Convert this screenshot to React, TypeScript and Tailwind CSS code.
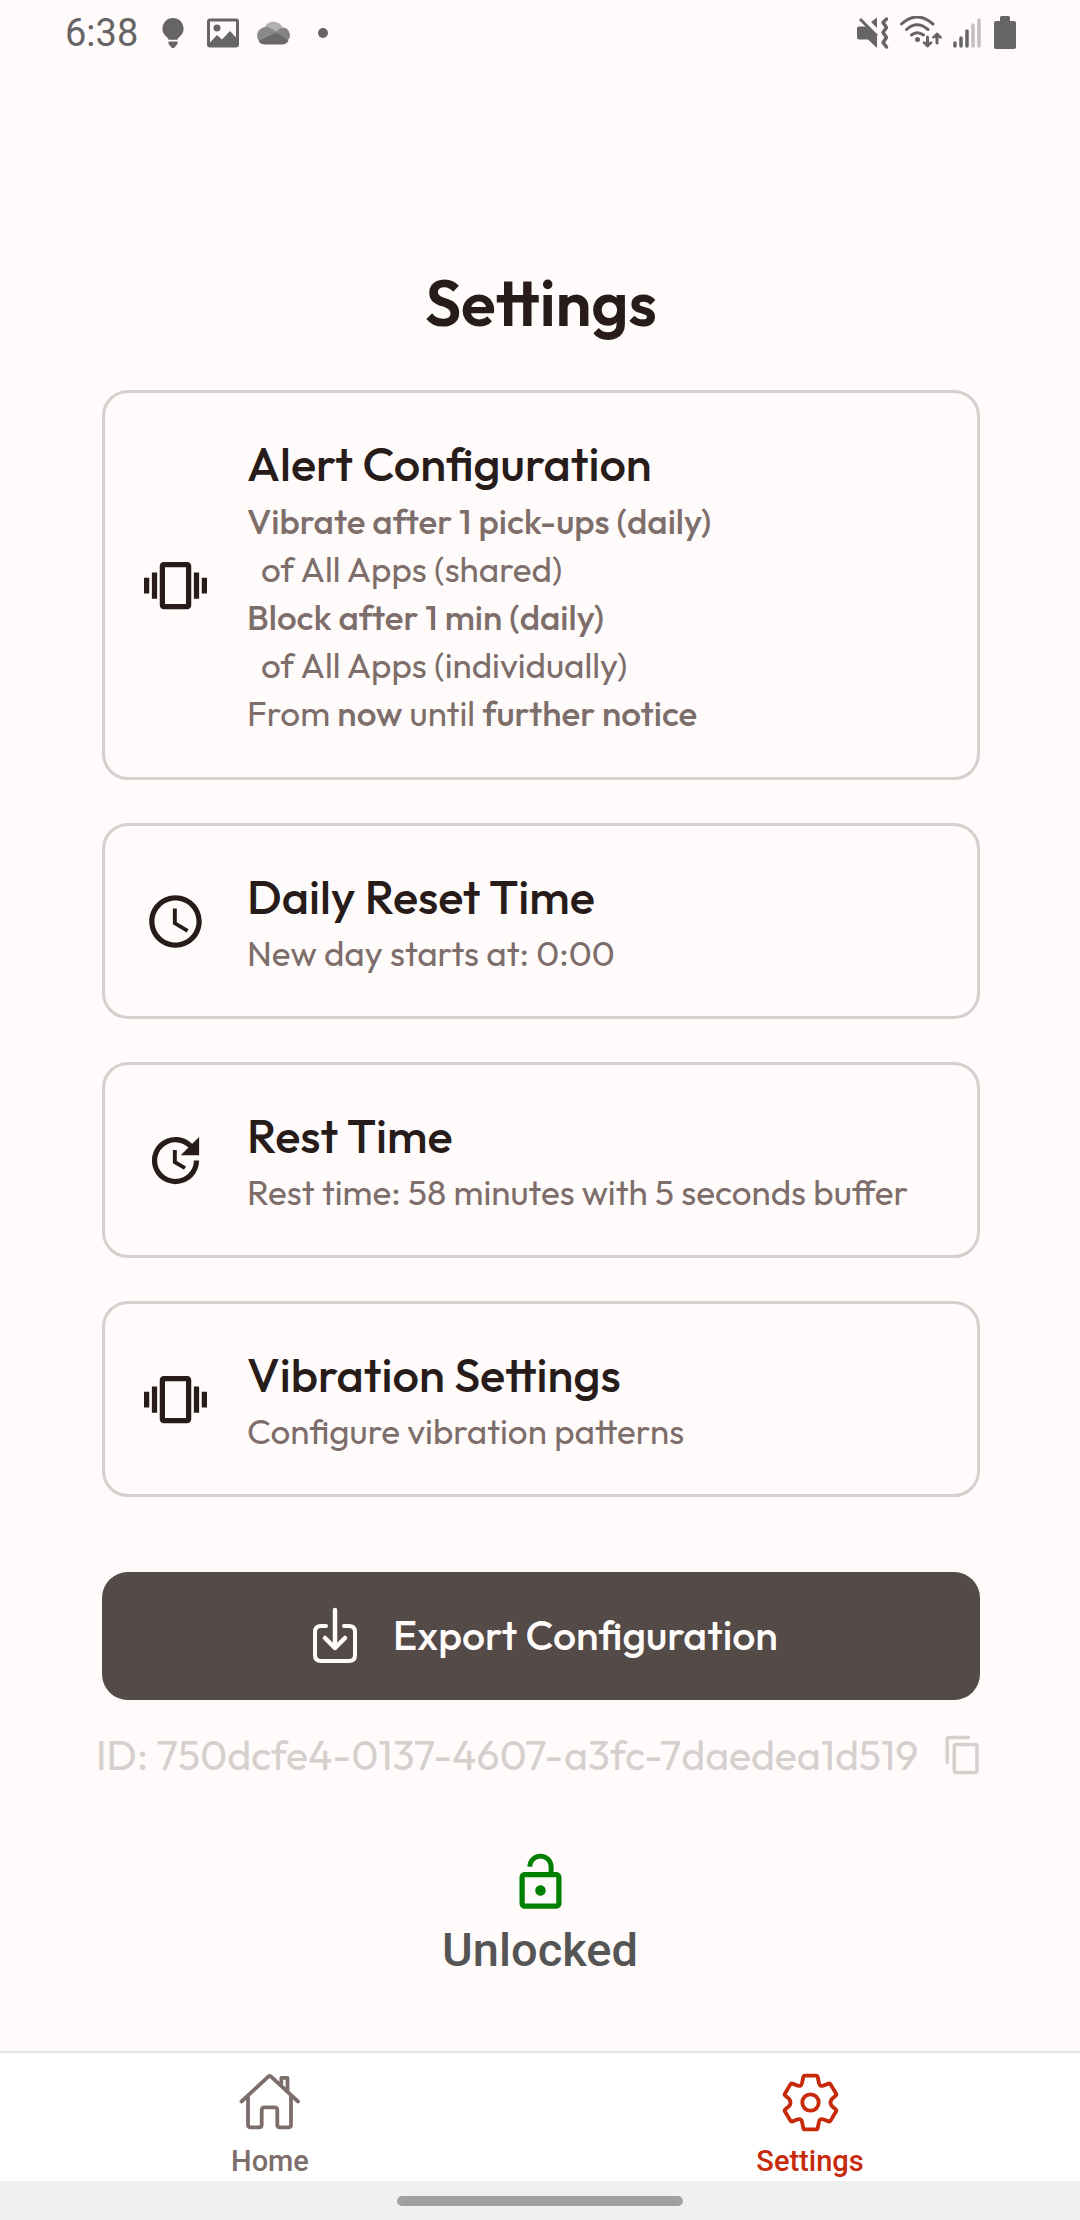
import type { ReactNode } from 'react';

const VIBRATION =
  'M0 15h2V9H0v6zm3 2h2V7H3v10zm19-8v6h2V9h-2zm-3 8h2V7h-2v10zM16.5 3h-9C6.67 3 6 3.67 6 4.5v15c0 .83.67 1.5 1.5 1.5h9c.83 0 1.5-.67 1.5-1.5v-15c0-.83-.67-1.5-1.5-1.5zM16 19H8V5h8v14z';
const CLOCK =
  'M11.99 2C6.47 2 2 6.48 2 12s4.47 10 9.99 10C17.52 22 22 17.52 22 12S17.52 2 11.99 2zM12 20c-4.42 0-8-3.58-8-8s3.58-8 8-8 8 3.58 8 8-3.58 8-8 8zm.5-13H11v6l5.25 3.15.75-1.23-4.5-2.67z';
const UPDATE =
  'M11 8v5l4.25 2.52.77-1.28-3.52-2.09V8H11zm10 2V3l-2.64 2.64C16.74 4.01 14.49 3 12 3a9 9 0 1 0 9 9h-2c0 3.86-3.14 7-7 7s-7-3.14-7-7 3.14-7 7-7c1.93 0 3.68.79 4.95 2.05L14 10h7z';
const COPY =
  'M16 1H4c-1.1 0-2 .9-2 2v14h2V3h12V1zm3 4H8c-1.1 0-2 .9-2 2v14c0 1.1.9 2 2 2h11c1.1 0 2-.9 2-2V7c0-1.1-.9-2-2-2zm0 16H8V7h11v14z';
const LOCK_OPEN =
  'M12 17c1.1 0 2-.9 2-2s-.9-2-2-2-2 .9-2 2 .9 2 2 2zm6-9h-1V6c0-2.76-2.24-5-5-5S7 3.24 7 6h1.9c0-1.71 1.39-3.1 3.1-3.1s3.1 1.39 3.1 3.1v2H6c-1.1 0-2 .9-2 2v10c0 1.1.9 2 2 2h12c1.1 0 2-.9 2-2V10c0-1.1-.9-2-2-2zm0 12H6V10h12v10z';

function Glyph({ d, className }: { d: string; className: string }) {
  return (
    <svg viewBox="0 0 24 24" fill="currentColor" aria-hidden="true" className={className}>
      <path d={d} />
    </svg>
  );
}

function StatusBar() {
  return (
    <header className="flex h-[66px] items-center justify-between pl-[65px] pr-16 font-['Roboto',sans-serif] text-[#666464]">
      <div className="flex items-center">
        <time className="text-[38px] leading-[66px]">6:38</time>
        <svg viewBox="0 0 22 32" fill="currentColor" className="ml-6 h-8 w-[22px]">
          <path d="M11 1a10.500 10.500 0 0 1 6.500 18.700c-1 1-1.700 1.500-2 3H6.500c-.3-1.500-1-2-2-3A10.500 10.500 0 0 1 11 1zM6.500 24.500h9v2.500l-3.500 4h-2l-3.500-4z" />
        </svg>
        <svg viewBox="0 0 32 32" className="ml-[23px] size-8">
          <path fillRule="evenodd" fill="currentColor" d="M3 1.500h26a3 3 0 0 1 3 3v23a3 3 0 0 1-3 3H3a3 3 0 0 1-3-3v-23a3 3 0 0 1 3-3zM3 4.500v21l7-7.500 5 4.500 8-8.500 6 6.500v-16z" />
          <circle cx="10" cy="11" r="3.500" fill="currentColor" />
        </svg>
        <svg viewBox="0 0 34 32" className="ml-[17px] h-8 w-[34px]">
          <path fill="#b3b1b0" d="M8 12C10 3 23 2 27 11L20 17z" />
          <path fill="#8b8988" d="M3 24A8.500 8.500 0 0 1 8 10.300Q12 9.500 15 11.500L22 15.500 6 26z" />
          <path fill="#858382" d="M20 15.500C23 11 28 9.500 31 12a8 8 0 0 1 2 10l-3 2z" />
          <path fill="#6a6867" d="M20 15.500L32.500 23.500C31.500 26 29 27.500 26 27.500H9C6 27.500 4 26.500 2.500 24z" />
        </svg>
        <span className="ml-7 size-[10px] rounded-full bg-current" />
      </div>
      <div className="flex items-center">
        <svg viewBox="0 0 32 34" fill="none" stroke="currentColor" className="h-[34px] w-8">
          <path fill="currentColor" stroke="none" d="M2 10.500h7L20 21v11l-9-8.500H2a2 2 0 0 1-2-2v-9a2 2 0 0 1 2-2zM20 1.500V12l-6-6z" />
          <path strokeWidth="3" d="M3 3l17 17" />
          <path strokeWidth="3.500" strokeLinecap="round" strokeLinejoin="round" d="M29.500 3L26 6.500l3.500 5-3.500 5 3.500 5-3.500 5 3.500 4.500" />
        </svg>
        <svg viewBox="0 0 44 34" fill="none" stroke="currentColor" strokeWidth="3" strokeLinecap="round" className="ml-[10px] h-[34px] w-11">
          <path d="M2.500 8Q18-6 34 8M7.500 13.500Q18 4 29 13.500M12.500 19Q18 14.500 24.500 19" />
          <circle cx="18.500" cy="23.500" r="2.500" fill="currentColor" stroke="none" />
          <path d="M28.500 21v8M38 27v-8" />
          <path strokeWidth="2" strokeLinejoin="round" fill="currentColor" d="M24.500 26.500l4 4 4-4-4 1zM34 21.500l4-4 4 4-4-1z" />
        </svg>
        <svg viewBox="0 0 28 34" fill="none" stroke="currentColor" strokeWidth="3.500" strokeLinecap="round" className="ml-[10px] h-[34px] w-7">
          <path d="M2 27v3M8 22v8M14 15v15" />
          <path stroke="#c3c0bf" d="M20 9v21M26 4v26" />
        </svg>
        <svg viewBox="0 0 22 34" fill="currentColor" className="ml-[13px] h-[34px] w-[22px]">
          <path d="M6 1.500Q6 0 7.500 0h7Q16 0 16 1.500V5h4q2 0 2 2v24q0 2-2 2H2q-2 0-2-2V7q0-2 2-2h4z" />
        </svg>
      </div>
    </header>
  );
}

function SettingCard({ icon, title, children }: { icon: string; title: string; children: ReactNode }) {
  return (
    <button type="button" className="flex w-full items-center gap-10 rounded-[26px] border-[3px] border-[#d5cfce] px-[39px] py-[39px] text-left">
      <Glyph d={icon} className="size-[63px] shrink-0 text-[#271c1a]" />
      <span className="min-w-0 flex-1">
        <span className="block text-[47px] font-medium leading-[64px] text-[#271c1a]">{title}</span>
        <span className="block text-[35px] leading-[48px] text-[#7d6e6b]">{children}</span>
      </span>
    </button>
  );
}

function HomeIcon() {
  return (
    <svg viewBox="0 0 62 58" fill="none" stroke="currentColor" strokeWidth="3.800" strokeLinecap="round" strokeLinejoin="round" aria-hidden="true" className="h-[58px] w-[62px]">
      <path d="M2.500 28.500L29.300 3.600Q30.700 2.400 32.100 3.600L59 28.500" />
      <path d="M9 24V51.500Q9 54.300 11.800 54.300H20.200Q22.700 54.300 22.700 51.800V37.300Q22.700 34.300 25.700 34.300H35.500Q38.300 34.300 38.300 37.300V51.800Q38.300 54.300 40.800 54.300H49.400Q52 54.300 52 51.500V24" />
      <path d="M42.300 11V4.900H48.500V18" />
    </svg>
  );
}

function GearIcon() {
  return (
    <svg viewBox="0 0 57 59" fill="none" stroke="currentColor" strokeWidth="3.800" strokeLinejoin="round" aria-hidden="true" className="h-[59px] w-[57px]">
      <path d="M23 2.600H34Q35.400 2.600 35.700 4L37 10.200Q37.800 13.800 41 12.700L46.500 10.600Q47.900 10.200 48.600 11.400L54 20.500Q54.800 21.800 53.600 22.800L50 25.700Q47 29.500 50 33.300L53.600 36.200Q54.800 37.200 54 38.500L48.600 47.600Q47.900 48.800 46.500 48.400L41 46.300Q37.800 45.200 37 48.800L35.700 55Q35.400 56.400 34 56.400H23Q21.600 56.400 21.300 55L20 48.800Q19.200 45.200 16 46.300L10.500 48.400Q9.100 48.800 8.400 47.600L3 38.500Q2.200 37.200 3.400 36.200L7 33.300Q10 29.500 7 25.700L3.400 22.800Q2.200 21.800 3 20.500L8.400 11.400Q9.100 10.200 10.500 10.600L16 12.700Q19.200 13.800 20 10.200L21.300 4Q21.600 2.600 23 2.600Z" />
      <circle cx="28.500" cy="29.500" r="8.200" />
    </svg>
  );
}

export default function App() {
  return (
    <div className="flex min-h-screen flex-col bg-[#fffbfa] font-['Outfit','Lato',sans-serif]">
      <StatusBar />
      <main className="flex flex-1 flex-col pt-[197px]">
        <div className="pl-[102px] pr-[100px]">
          <h1 className="text-center text-[64px] font-semibold leading-[80px] text-[#271c1a]">Settings</h1>
          <div className="mt-[47px] flex flex-col gap-[43px]">
            <SettingCard icon={VIBRATION} title="Alert Configuration">
              <span className="block py-px">
                <b className="block font-medium">Vibrate after 1 pick-ups (daily)</b>
                <span className="block pl-[14px]">of All Apps (shared)</span>
                <b className="block font-medium">Block after 1 min (daily)</b>
                <span className="block pl-[14px]">of All Apps (individually)</span>
                <span className="block">
                  From <b className="font-medium">now</b> until <b className="font-medium">further notice</b>
                </span>
              </span>
            </SettingCard>
            <SettingCard icon={CLOCK} title="Daily Reset Time">New day starts at: 0:00</SettingCard>
            <SettingCard icon={UPDATE} title="Rest Time">Rest time: 58 minutes with 5 seconds buffer</SettingCard>
            <SettingCard icon={VIBRATION} title="Vibration Settings">Configure vibration patterns</SettingCard>
          </div>
          <button type="button" className="mt-[75px] flex h-32 w-full items-center justify-center gap-[35px] rounded-[26px] bg-[#544a48] pl-2 text-[41px] font-medium text-[#fffbfa]">
            <svg viewBox="0 0 46 58" fill="none" stroke="currentColor" strokeWidth="4" strokeLinecap="round" strokeLinejoin="round" aria-hidden="true" className="h-[58px] w-[46px]">
              <path d="M14 19H9Q3 19 3 25V48Q3 54 9 54H37Q43 54 43 48V25Q43 19 37 19H32" />
              <path strokeWidth="4.500" d="M23 3V41M13 31L23 41L33 31" />
            </svg>
            Export Configuration
          </button>
        </div>
        <div className="mt-[27px] flex items-center justify-between px-24 text-[#d5cfce]">
          <p className="whitespace-nowrap text-[41px] leading-[56px]">ID: 750dcfe4-0137-4607-a3fc-7daedea1d519</p>
          <button type="button" aria-label="Copy ID">
            <Glyph d={COPY} className="size-[42px]" />
          </button>
        </div>
        <div className="mt-[68px] flex flex-col items-center">
          <Glyph d={LOCK_OPEN} className="size-[63px] text-[#008000]" />
          <p className="mt-2 font-['Roboto',sans-serif] text-[47px] font-medium leading-[56px] text-[#555555]">Unlocked</p>
        </div>
      </main>
      <nav className="grid grid-cols-2 border-t-2 border-[#e6e4e6] bg-white font-['Roboto',sans-serif] text-[29px] font-medium leading-[36px] shadow-[0_-2px_12px_rgba(0,0,0,0.03)]">
        <a href="#home" className="flex h-32 flex-col items-center gap-3 pt-5 text-[#7d6e6b]">
          <HomeIcon />
          Home
        </a>
        <a href="#settings" aria-current="page" className="flex h-32 flex-col items-center gap-[11px] pt-5 text-[#c62a0b]">
          <GearIcon />
          Settings
        </a>
      </nav>
      <div className="flex h-[39px] items-center justify-center bg-[#f0f0f0]">
        <span className="h-[10px] w-[286px] rounded-full bg-[#a0a0a0]" />
      </div>
    </div>
  );
}
